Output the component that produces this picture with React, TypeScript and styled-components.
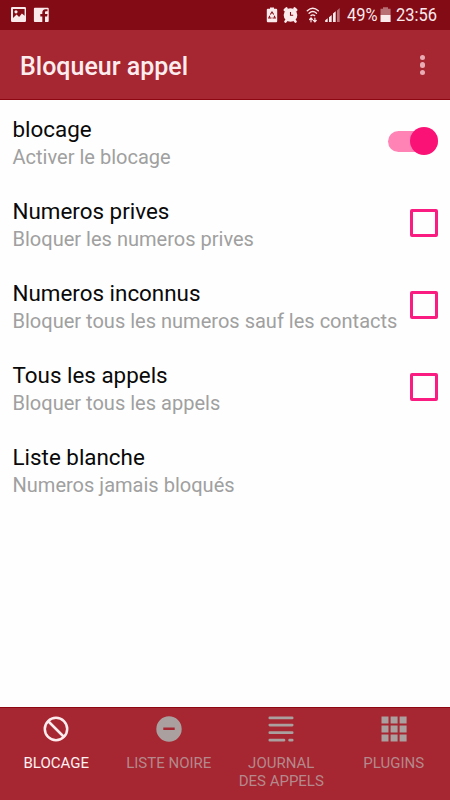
import React from "react";
import styled, { createGlobalStyle } from "styled-components";

const GlobalStyle = createGlobalStyle`
  * { box-sizing: border-box; }
  body { margin: 0; background: #fefefe; font-family: Roboto, "Liberation Sans", sans-serif; }
`;

const Screen = styled.div`
  width: 450px;
  height: 800px;
  display: flex;
  flex-direction: column;
  overflow: hidden;
  background: #fefefe;
`;

const StatusBar = styled.header`
  height: 30px;
  flex: none;
  display: flex;
  justify-content: space-between;
  background: #830b15;
  color: #faeaec;
`;

const StatusIcons = styled.svg`
  display: block;
  flex: none;
`;

const StatusGroup = styled.div`
  display: flex;
  align-items: flex-start;
`;

const StatusText = styled.span<{ $width: number }>`
  width: ${(p) => p.$width}px;
  font-size: 18.5px;
  line-height: 31px;
  white-space: nowrap;
  transform: scaleX(0.89);
  transform-origin: 0 50%;
`;

const Toolbar = styled.div`
  height: 70px;
  flex: none;
  display: flex;
  align-items: center;
  justify-content: space-between;
  padding: 1px 25px 0 20px;
  background: #a62631;
  border-bottom: 1px solid #8d0713;
`;

const Title = styled.h1`
  margin: 0;
  padding-top: 3px;
  font-size: 25px;
  font-weight: 500;
  line-height: 30px;
  color: #fcecee;
`;

const MenuButton = styled.button`
  display: flex;
  flex-direction: column;
  gap: 2.4px;
  padding: 0;
  border: 0;
  background: none;
`;

const Dot = styled.span`
  width: 5.2px;
  height: 5.2px;
  border-radius: 50%;
  background: #e9acb4;
`;

const Settings = styled.main`
  flex: 1;
`;

const Row = styled.div`
  height: 82.15px;
  display: flex;
  align-items: center;
  justify-content: space-between;
  padding: 0 12.5px;
`;

const RowText = styled.div`
  align-self: flex-start;
  padding-top: 14.6px;
  white-space: nowrap;
`;

const RowTitle = styled.div`
  font-size: 22.4px;
  line-height: 29px;
  color: #090909;
`;

const RowSummary = styled.div`
  margin-top: -0.8px;
  font-size: 20.05px;
  line-height: 28px;
  color: #a0a0a0;
`;

const Track = styled.div`
  width: 50px;
  height: 21px;
  display: flex;
  align-items: center;
  justify-content: flex-end;
  background: #ff84b5;
  border-radius: 11px;
`;

const Thumb = styled.div`
  width: 28px;
  height: 28px;
  flex: none;
  border-radius: 50%;
  background: #fb1276;
`;

const CheckBox = styled.div`
  width: 28px;
  height: 28px;
  border: 3px solid #fa1c80;
  border-radius: 2px;
`;

const TabBar = styled.nav`
  height: 93px;
  flex: none;
  display: grid;
  grid-template-columns: repeat(4, 1fr);
  background: #a62631;
  border-top: 1px solid #8d0713;
`;

const Tab = styled.button<{ $active?: boolean }>`
  display: flex;
  flex-direction: column;
  align-items: center;
  padding: 8.4px 0 0;
  border: 0;
  background: none;
  color: ${(p) => (p.$active ? "#fff0f1" : "#b5898c")};
`;

const TabIcon = styled.svg<{ $active?: boolean }>`
  display: block;
  color: ${(p) => (p.$active ? "#fdecee" : "#aaa09f")};
`;

const TabLabel = styled.span`
  margin-top: 11.6px;
  font-family: Roboto, sans-serif;
  font-size: 15px;
  line-height: 18px;
  white-space: pre-line;
`;

const settings = [
  { title: "blocage", summary: "Activer le blocage", control: "switch" },
  { title: "Numeros prives", summary: "Bloquer les numeros prives", control: "check" },
  { title: "Numeros inconnus", summary: "Bloquer tous les numeros sauf les contacts", control: "check" },
  { title: "Tous les appels", summary: "Bloquer tous les appels", control: "check" },
  { title: "Liste blanche", summary: "Numeros jamais bloqués", control: "none" },
];

const tabs = [
  {
    label: "BLOCAGE",
    active: true,
    icon: (
      <g fill="none" stroke="currentColor" strokeWidth="2.5">
        <circle cx="13" cy="13" r="11.2" />
        <path d="M5 5L21 21" />
      </g>
    ),
  },
  {
    label: "LISTE NOIRE",
    icon: (
      <path fill="currentColor" fillRule="evenodd" d="M13 .3a12.7 12.7 0 1 0 0 25.4a12.7 12.7 0 0 0 0-25.4zM7.3 11.5h11.4v2.5H7.3z" />
    ),
  },
  {
    label: "JOURNAL\nDES APPELS",
    icon: (
      <path fill="none" stroke="currentColor" strokeWidth="2.7" strokeLinecap="round" d="M1.8 1.9H24.2M1.8 9.1H24.2M1.8 16.7H24.2M1.8 24.2H16M21.6 24.2H24.2" />
    ),
  },
  {
    label: "PLUGINS",
    icon: (
      <path fill="currentColor" d="M.5.6h7v7h-7zM9.6.6h7v7h-7zM18.6.6h7v7h-7zM.5 9.4h7v7h-7zM9.6 9.4h7v7h-7zM18.6 9.4h7v7h-7zM.5 18.5h7v7h-7zM9.6 18.5h7v7h-7zM18.6 18.5h7v7h-7z" />
    ),
  },
];

export default function App() {
  return (
    <>
      <GlobalStyle />
      <Screen>
        <StatusBar>
          <StatusIcons width="60" height="30" viewBox="0 0 60 30" fill="currentColor">
            <path fillRule="evenodd" d="M12.2 7h12.6q1.2 0 1.2 1.2v12.6q0 1.2-1.2 1.2H12.2q-1.2 0-1.2-1.2V8.2q0-1.2 1.2-1.2zM13 9v9l3.6-3.4 2.5 2.3 2.8-3.5 2.7 2.3V9z" />
            <circle cx="16" cy="11.8" r="1.6" />
            <path d="M34.8 7.8h13a.9.9 0 0 1 .9.9v12.4a.9.9 0 0 1-.9.9H45v-5.500h2.100l.4-2.400H45v-1.500c0-.9.4-1.300 1.300-1.300h1.200V9.200h-2c-2.100 0-3.200 1.300-3.200 3.200v1.700h-2v2.400h2V22h-7.500a.9.9 0 0 1-.9-.9V8.700a.9.9 0 0 1 .9-.9z" />
          </StatusIcons>
          <StatusGroup>
            <StatusIcons width="80.5" height="30" viewBox="266 0 80.5 30" fill="currentColor">
              <path d="M270 7.5h4v1.3h2.2q1 0 1 1V21q0 1.2-1 1.2h-8.4q-1 0-1-1.2V9.8q0-1 1-1h2.2z" />
              <path fill="none" stroke="#830b15" strokeWidth="1.1" d="M270.3 14.5l1.7-2.5 1.7 2.5M274.2 15.8l1 2.2h-2.7M271.5 18h-2.7l1-2.2" />
              <circle cx="290.5" cy="15" r="6.8" />
              <path fill="none" stroke="currentColor" strokeWidth="2.6" strokeLinecap="round" d="M284.8 10l1.7-1.5M296.200 10l-1.700-1.500M286.700 20l-1.200 1.500M294.300 20l1.200 1.500" />
              <path fill="none" stroke="#830b15" strokeWidth="1.1" d="M290.500 12v3.300h2.700" />
              <g fill="none" stroke="currentColor" strokeWidth="1.4" strokeLinecap="round">
                <path d="M307.3 10.800q5.500-5 11 0M309.100 13.200q3.700-3.300 7.400 0M311 15.600q1.800-1.400 3.600 0" />
                <path strokeWidth="1.2" d="M311 21.800v-3.700M309.600 19.500l1.400-1.500 1.400 1.500M314.900 18v3.800M313.500 20.400l1.400 1.500 1.400-1.500" />
              </g>
              <path d="M325.200 22v-1.700l2.500-2v3.700zM329 22v-4.700l2.700-2.300v7zM333 22v-8.400l2.700-2.300v10.700z" />
              <path opacity=".45" d="M337 22V10.500l2.700-2.600V22z" />
            </StatusIcons>
            <StatusText $width={32.5}>49%</StatusText>
            <StatusIcons width="17" height="30" viewBox="379 0 17 30" fill="currentColor">
              <path opacity=".45" d="M383 7.2h5v1.6h2.6v6.2H380.500V8.800h2.500z" />
              <path d="M380.500 15h10.100v7h-10.100z" />
            </StatusIcons>
            <StatusText $width={54}>23:56</StatusText>
          </StatusGroup>
        </StatusBar>
        <Toolbar>
          <Title>Bloqueur appel</Title>
          <MenuButton aria-label="Menu"><Dot /><Dot /><Dot /></MenuButton>
        </Toolbar>
        <Settings>
          {settings.map((s) => (
            <Row key={s.title}>
              <RowText>
                <RowTitle>{s.title}</RowTitle>
                <RowSummary>{s.summary}</RowSummary>
              </RowText>
              {s.control === "switch" && <Track><Thumb /></Track>}
              {s.control === "check" && <CheckBox />}
            </Row>
          ))}
        </Settings>
        <TabBar>
          {tabs.map((t) => (
            <Tab key={t.label} $active={t.active}>
              <TabIcon $active={t.active} width="26" height="26" viewBox="0 0 26 26">{t.icon}</TabIcon>
              <TabLabel>{t.label}</TabLabel>
            </Tab>
          ))}
        </TabBar>
      </Screen>
    </>
  );
}
